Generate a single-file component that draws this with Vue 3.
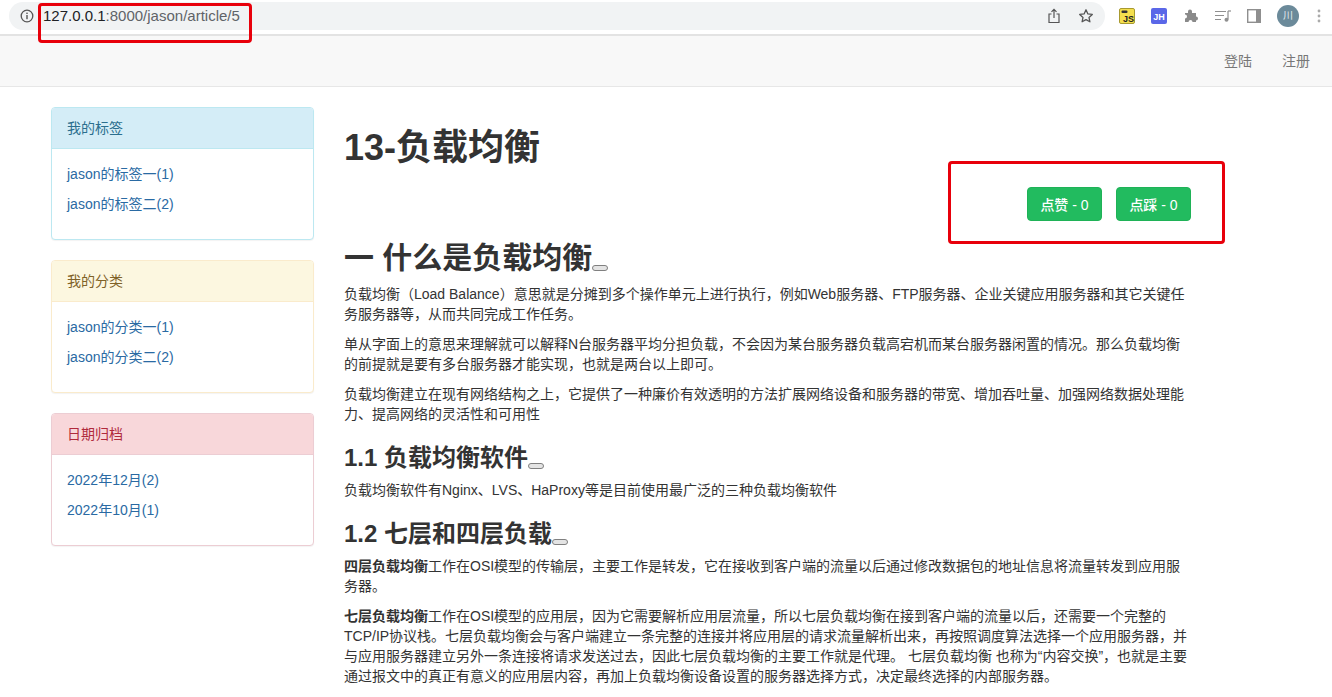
<template>
  <div class="page">
    <div class="toolbar">
      <div class="omnibox">
        <svg class="site-info" width="14" height="14" viewBox="0 0 14 14">
          <circle cx="7" cy="7" r="5.8" fill="none" stroke="#555" stroke-width="1.3" />
          <rect x="6.3" y="6" width="1.4" height="4.2" fill="#555" />
          <rect x="6.3" y="3.6" width="1.4" height="1.4" fill="#555" />
        </svg>
        <span class="url"><span class="host">127.0.0.1</span>:8000/jason/article/5</span>
        <svg class="omni-icon share" width="14" height="16" viewBox="0 0 14 16">
          <path d="M4.5 6H2v8.5h10V6H9.5M7 10V1.5M4.5 3.8L7 1.3l2.5 2.5" fill="none" stroke="#555" stroke-width="1.2" />
        </svg>
        <svg class="omni-icon" width="16" height="16" viewBox="0 0 16 16">
          <path d="M8 1.8l1.9 4.1 4.4.5-3.3 3 .9 4.4L8 11.6l-3.9 2.2.9-4.4-3.3-3 4.4-.5z" fill="none" stroke="#555" stroke-width="1.3" stroke-linejoin="round" />
        </svg>
      </div>
      <div class="extensions">
        <svg width="16" height="16" viewBox="0 0 16 16">
          <rect x=".5" y=".5" width="15" height="15" rx="1.5" fill="#f4df4e" stroke="#a89a30" />
          <rect x="2.5" y="2.5" width="6" height="2.5" rx="1" fill="#333" />
          <text x="9.5" y="14" class="ext-text" text-anchor="middle" fill="#222">JS</text>
        </svg>
        <svg width="16" height="16" viewBox="0 0 16 16">
          <rect width="16" height="16" rx="2" fill="#5a67e8" />
          <text x="8" y="11.5" class="ext-text" text-anchor="middle" fill="#fff">JH</text>
        </svg>
        <svg width="16" height="16" viewBox="0 0 16 16">
          <path d="M1 6h3V4.5a2 2 0 0 1 4 0V6h4v3.5a2 2 0 0 1 0 4V15H8.5a2 2 0 0 0-4 0H1v-3.5a2 2 0 0 0 0-4z" fill="#8a8a8a" transform="translate(1 -1)" />
        </svg>
        <svg width="16" height="14" viewBox="0 0 16 14">
          <path d="M0 2.5h11M0 6.5h9M0 10.5h6M13 2v8.5" fill="none" stroke="#8f8f8f" stroke-width="1.2" />
          <circle cx="11.5" cy="10.8" r="2" fill="#8f8f8f" />
          <path d="M13 2h3" stroke="#8f8f8f" stroke-width="1.2" />
        </svg>
        <svg width="14" height="14" viewBox="0 0 14 14">
          <rect x=".7" y=".7" width="12.6" height="12.6" fill="#fff" stroke="#8f8f8f" stroke-width="1.4" />
          <rect x="9" y="1" width="4" height="12" fill="#8f8f8f" />
        </svg>
        <div class="avatar">川</div>
        <svg class="dots" width="4" height="14" viewBox="0 0 4 14">
          <circle cx="2" cy="2" r="1.4" fill="#aaa" />
          <circle cx="2" cy="7" r="1.4" fill="#aaa" />
          <circle cx="2" cy="12" r="1.4" fill="#aaa" />
        </svg>
      </div>
    </div>

    <nav class="navbar">
      <a class="nav-link">登陆</a>
      <a class="nav-link">注册</a>
    </nav>

    <div class="main">
      <aside class="sidebar">
        <section v-for="panel in panels" :key="panel.title" class="panel" :class="panel.kind">
          <div class="panel-heading">{{ panel.title }}</div>
          <div class="panel-body">
            <p v-for="item in panel.items" :key="item"><a>{{ item }}</a></p>
          </div>
        </section>
      </aside>

      <article class="article">
        <h1>13-负载均衡</h1>
        <div class="actions">
          <button class="btn">点赞 - 0</button>
          <button class="btn">点踩 - 0</button>
        </div>

        <h2>一 什么是负载均衡<span class="anchor"></span></h2>
        <p>负载均衡（Load Balance）意思就是分摊到多个操作单元上进行执行，例如Web服务器、FTP服务器、企业关键应用服务器和其它关键任务服务器等，从而共同完成工作任务。</p>
        <p>单从字面上的意思来理解就可以解释N台服务器平均分担负载，不会因为某台服务器负载高宕机而某台服务器闲置的情况。那么负载均衡的前提就是要有多台服务器才能实现，也就是两台以上即可。</p>
        <p>负载均衡建立在现有网络结构之上，它提供了一种廉价有效透明的方法扩展网络设备和服务器的带宽、增加吞吐量、加强网络数据处理能力、提高网络的灵活性和可用性</p>

        <h3>1.1 负载均衡软件<span class="anchor"></span></h3>
        <p>负载均衡软件有Nginx、LVS、HaProxy等是目前使用最广泛的三种负载均衡软件</p>

        <h3>1.2 七层和四层负载<span class="anchor"></span></h3>
        <p><strong>四层负载均衡</strong>工作在OSI模型的传输层，主要工作是转发，它在接收到客户端的流量以后通过修改数据包的地址信息将流量转发到应用服务器。</p>
        <p><strong>七层负载均衡</strong>工作在OSI模型的应用层，因为它需要解析应用层流量，所以七层负载均衡在接到客户端的流量以后，还需要一个完整的TCP/IP协议栈。七层负载均衡会与客户端建立一条完整的连接并将应用层的请求流量解析出来，再按照调度算法选择一个应用服务器，并与应用服务器建立另外一条连接将请求发送过去，因此七层负载均衡的主要工作就是代理。 七层负载均衡 也称为“内容交换”，也就是主要通过报文中的真正有意义的应用层内容，再加上负载均衡设备设置的服务器选择方式，决定最终选择的内部服务器。</p>
      </article>
    </div>

    <div class="mark mark-url"></div>
    <div class="mark mark-btn"></div>
  </div>
</template>

<script setup>
const panels = [
  { kind: 'info', title: '我的标签', items: ['jason的标签一(1)', 'jason的标签二(2)'] },
  { kind: 'warning', title: '我的分类', items: ['jason的分类一(1)', 'jason的分类二(2)'] },
  { kind: 'danger', title: '日期归档', items: ['2022年12月(2)', '2022年10月(1)'] },
]
</script>

<style>
html,
body {
  margin: 0;
  background: #fff;
  overflow: hidden;
}
</style>

<style scoped>
.page {
  position: relative;
  height: 697px;
  overflow: hidden;
  font-family: "Liberation Sans", "Noto Sans CJK SC", sans-serif;
  font-size: 14px;
  line-height: 20px;
  color: #333;
}

.toolbar {
  display: flex;
  align-items: center;
  height: 34px;
  padding: 0 0 0 9px;
  border-bottom: 2px solid #e3e3e3;
  background: #fff;
}

.omnibox {
  display: flex;
  align-items: center;
  width: 1096px;
  height: 28px;
  margin-top: -2px;
  padding: 0 11px;
  box-sizing: border-box;
  background: #f1f3f4;
  border-radius: 14px;
}

.site-info {
  flex: none;
  margin-right: 9px;
}

.url {
  flex: 1;
  font-size: 15px;
  color: #5f6368;
}

.host {
  color: #202124;
}

.omni-icon {
  flex: none;
  margin-left: 17px;
}

.extensions {
  display: flex;
  align-items: center;
  gap: 16px;
  margin-top: -2px;
  padding-left: 14px;
}

.ext-text {
  font-size: 9px;
  font-weight: 700;
}

.avatar {
  width: 22px;
  height: 22px;
  border-radius: 50%;
  background: #6b8a9a;
  color: #e6edf0;
  font-size: 10px;
  line-height: 22px;
  text-align: center;
}

.dots {
  margin-left: 2px;
}

.navbar {
  display: flex;
  justify-content: flex-end;
  align-items: center;
  gap: 30px;
  height: 50px;
  padding-right: 22px;
  background: #f8f8f8;
  border-bottom: 1px solid #e7e7e7;
}

.nav-link {
  color: #777;
}

.main {
  display: flex;
  align-items: flex-start;
  padding: 20px 0 0 51px;
}

.sidebar {
  flex: none;
  width: 263px;
  margin-right: 30px;
}

.panel {
  margin-bottom: 20px;
  border: 1px solid;
  border-radius: 4px;
  background: #fff;
  box-shadow: 0 1px 1px rgba(0, 0, 0, 0.05);
}

.panel-heading {
  padding: 10px 15px;
  border-bottom: 1px solid;
  border-radius: 3px 3px 0 0;
}

.panel-body {
  padding: 15px;
}

.panel-body p {
  margin: 0 0 10px;
}

.panel-body a {
  color: #2a6aa3;
}

.panel.info {
  border-color: #bce8f1;
}

.info .panel-heading {
  color: #2b6f8e;
  background: #d4edf7;
  border-color: #bce8f1;
}

.panel.warning {
  border-color: #faebcc;
}

.warning .panel-heading {
  color: #7f6228;
  background: #fcf7e0;
  border-color: #faebcc;
}

.panel.danger {
  border-color: #eccdd3;
}

.danger .panel-heading {
  color: #b02a3c;
  background: #f8d7da;
  border-color: #eccdd3;
}

.article {
  flex: none;
  width: 850px;
}

.article h1 {
  margin: 21px 0 10px;
  font-size: 36px;
  line-height: 40px;
  font-weight: 700;
}

.actions {
  display: flex;
  justify-content: flex-end;
  gap: 14px;
  padding-top: 9px;
  height: 34px;
  margin-right: 3px;
}

.btn {
  width: 75px;
  height: 34px;
  padding: 0;
  border: 1px solid #1fb257;
  border-radius: 4px;
  background: #22bb5f;
  color: #fff;
  font-family: inherit;
  font-size: 14px;
  font-weight: 500;
}

.article h2 {
  margin: 20px 0 10px;
  font-size: 30px;
  line-height: 33px;
  font-weight: 700;
}

.article h3 {
  margin: 21px 0 9px;
  font-size: 24px;
  line-height: 26px;
  font-weight: 700;
}

.article p {
  margin: 0 0 10px;
}

.anchor {
  display: inline-block;
  width: 14px;
  height: 4px;
  border: 1px solid #808080;
  border-radius: 3px;
  background: #e4e4e4;
  vertical-align: -3px;
}

.mark {
  position: absolute;
  border: 3px solid #e8000b;
  border-radius: 4px;
  box-sizing: border-box;
}

.mark-url {
  left: 38px;
  top: 3px;
  width: 214px;
  height: 40px;
}

.mark-btn {
  left: 948px;
  top: 161px;
  width: 277px;
  height: 83px;
}
</style>
